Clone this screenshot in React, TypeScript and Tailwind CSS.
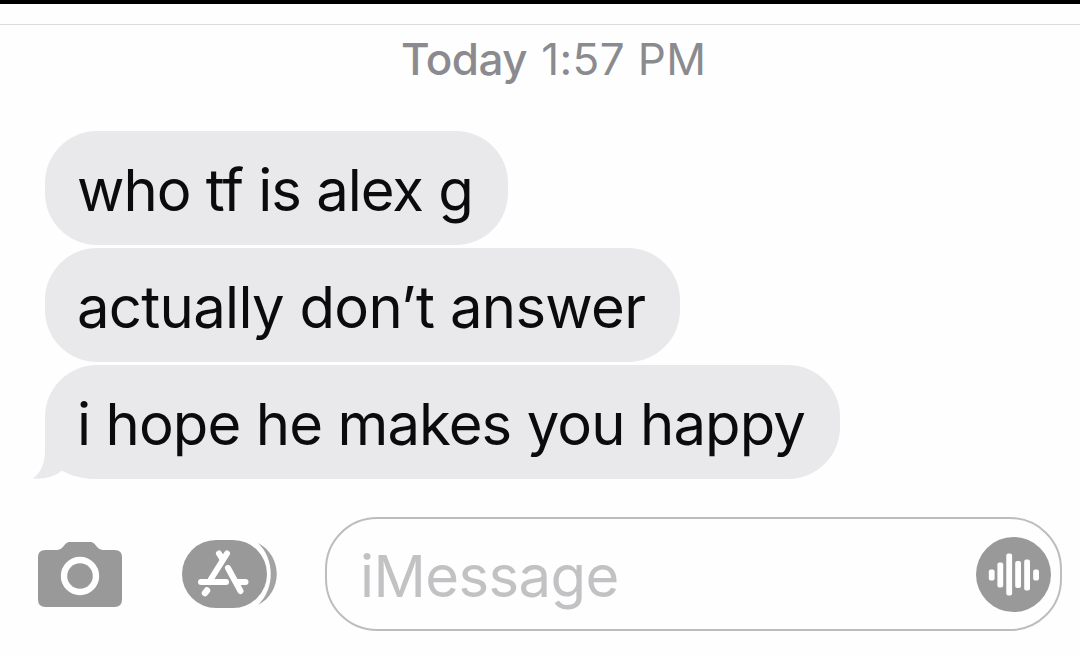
const messages = [
  {
    text: "who tf is alex g",
    bubble: "w-[463px]",
    tracking: "tracking-[-1px]",
  },
  {
    text: "actually don’t answer",
    bubble: "w-[635px]",
    tracking: "tracking-[-0.7px]",
  },
  {
    text: "i hope he makes you happy",
    bubble: "w-[795px]",
    tracking: "tracking-[-0.9px]",
    tail: true,
  },
];

function BubbleTail() {
  return (
    <svg
      className="absolute -left-3 bottom-0 h-[56px] w-[64px]"
      viewBox="0 0 64 56"
      fill="#e9e9eb"
    >
      <path d="M12 0V27C12 41 8 49 0 55.5C11 56.5 21 54 29 47.5C36 52 46 55 60 56L64 20Z" />
    </svg>
  );
}

function CameraIcon() {
  return (
    <svg className="h-[66px] w-[85px]" viewBox="0 0 85 66">
      <path
        d="M8 9H18C22 9 24.5 7 26.5 4C28.5 1.5 30 1 33 1H51C54 1 55.5 1.5 57.5 4C59.5 7 62 9 66 9H76.5Q84 9 84 16V58.5Q84 66 76.5 66H7.5Q0 66 0 58.5V16Q0 9 7.5 9Z"
        fill="#999"
      />
      <circle cx="42" cy="35" r="16" fill="none" stroke="#fff" strokeWidth="6.4" />
    </svg>
  );
}

function AppStoreIcon() {
  return (
    <svg className="h-[68px] w-[96px]" viewBox="0 0 96 68">
      <path d="M76 3C101 16 101 52 76 65C93 49 93 19 76 3Z" fill="#a3a3a3" />
      <rect width="85" height="68" rx="34" fill="#999" />
      <g stroke="#fff" strokeWidth="6" strokeLinecap="round">
        <path d="M45 13.5L29 39" />
        <path d="M37 13.5L40 18.5M46 28L58.5 51" />
        <path d="M19 42H44M55 42H63.5" />
        <path d="M25 50.5L23 53" strokeWidth="6.5" />
      </g>
    </svg>
  );
}

const bars = [
  { x: 12.8, y: 32.5, h: 11 },
  { x: 21.4, y: 25.5, h: 25 },
  { x: 30.3, y: 16.5, h: 42 },
  { x: 39.2, y: 24, h: 27 },
  { x: 48.2, y: 22.5, h: 31 },
  { x: 57.2, y: 32.5, h: 11 },
];

function AudioIcon() {
  return (
    <svg className="h-[75px] w-[75px]" viewBox="0 0 75 75">
      <circle cx="37.5" cy="37.5" r="37.5" fill="#999" />
      {bars.map((bar) => (
        <rect key={bar.x} x={bar.x} y={bar.y} width="5.8" height={bar.h} rx="2" fill="#fff" />
      ))}
    </svg>
  );
}

export default function App() {
  return (
    <div className="flex h-[655px] w-[1080px] flex-col overflow-hidden bg-[#fefefe] font-['Inter',sans-serif]">
      <div className="h-1 shrink-0 bg-black" />
      <div className="h-[21px] shrink-0 border-b border-[#dcdcdc]" />

      <div className="flex h-[106px] shrink-0 items-start gap-[14px] pl-[401px] pt-1.5 text-[44px] leading-[56px] whitespace-nowrap text-[#8b8b8f]">
        <span className="font-medium tracking-[-0.5px]">Today</span>
        <span className="tracking-[0.4px]">1:57 PM</span>
      </div>

      <div className="flex shrink-0 flex-col gap-[3px] pl-[45px]">
        {messages.map((message) => (
          <div
            key={message.text}
            className={`relative flex h-[114px] items-center rounded-[52px] bg-[#e9e9eb] pl-8 ${message.bubble}`}
          >
            {message.tail && <BubbleTail />}
            <p
              className={`relative pt-1 text-[58px] font-[440] leading-[70px] whitespace-nowrap text-[#0b0b0c] ${message.tracking}`}
            >
              {message.text}
            </p>
          </div>
        ))}
      </div>

      <div className="mt-[38px] flex shrink-0 items-center pl-[38px]">
        <CameraIcon />
        <div className="ml-[59px]">
          <AppStoreIcon />
        </div>
        <div className="ml-[47px] flex h-[114px] w-[737px] items-center justify-between rounded-[52px] border-2 border-[#bdbdbf] pl-[33px] pr-[9px]">
          <span className="pt-1 text-[58px] leading-[70px] tracking-[-0.6px] text-[#c2c2c4]">iMessage</span>
          <AudioIcon />
        </div>
      </div>
    </div>
  );
}
